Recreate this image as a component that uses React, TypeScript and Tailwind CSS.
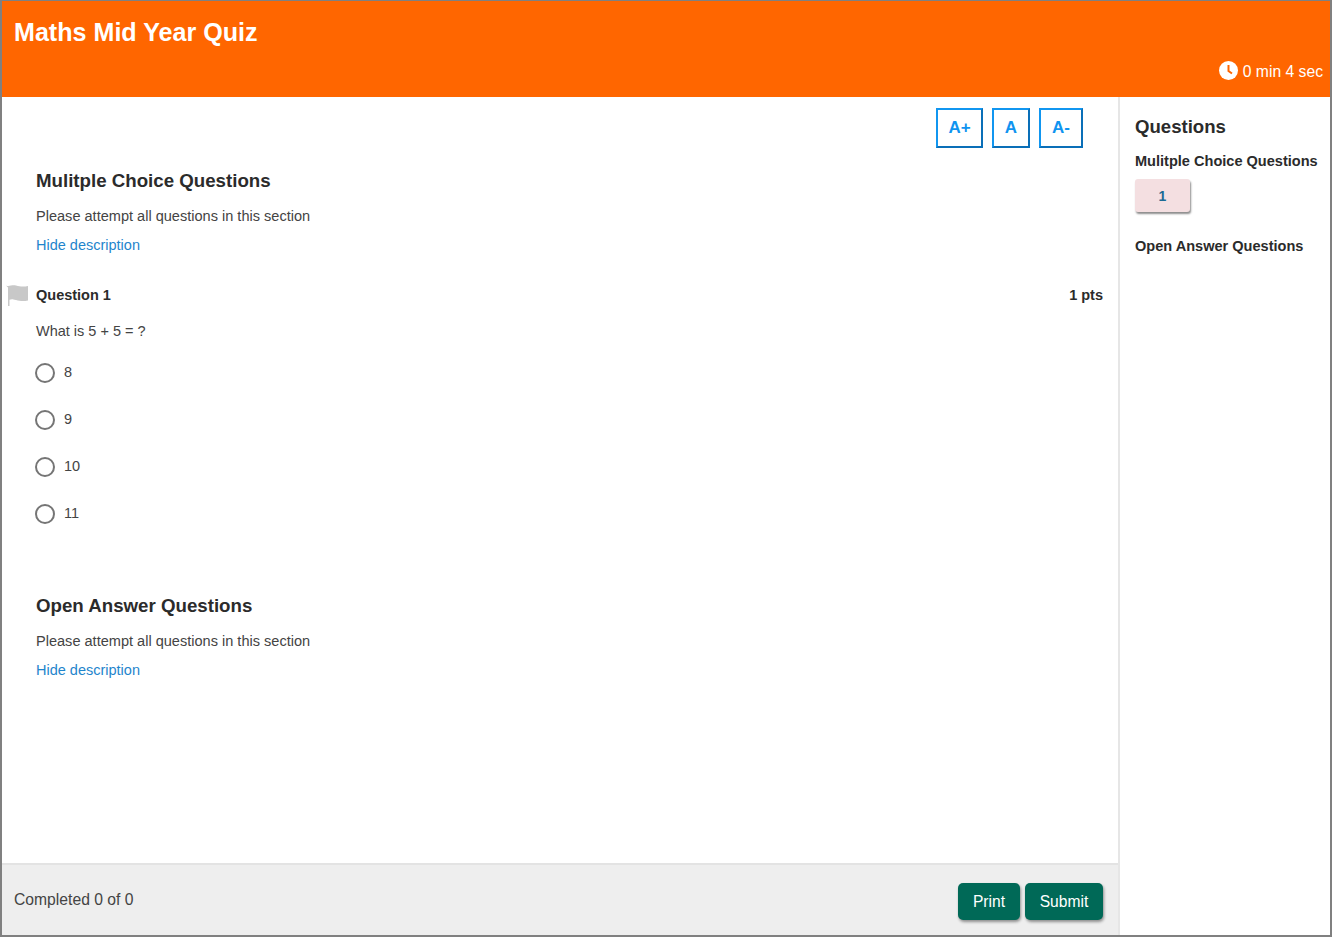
const options = ['8', '9', '10', '11'];

function SectionIntro({ title }: { title: string }) {
    return (
        <div>
            <h2 className="text-[18.7px] leading-[24px] font-bold text-[#2b2b2b]">{title}</h2>
            <p className="mt-[13px] text-[14.55px] leading-[20px] text-[#444]">Please attempt all questions in this section</p>
            <a className="block mt-[9px] text-[14.5px] leading-[20px] text-[#1f85cc]">Hide description</a>
        </div>
    );
}

function FontButton({ label, width }: { label: string; width: string }) {
    return (
        <button className={`${width} h-[40px] border-2 border-t-[#1196f0] border-l-[#1196f0] border-r-[#0a6fb8] border-b-[#0a6fb8] bg-white text-[17px] font-bold text-[#0f94f0]`}>
            {label}
        </button>
    );
}

export default function App() {
    return (
        <div className="w-[1332px] h-[937px] flex flex-col bg-white border-2 border-t border-[#808080] overflow-hidden font-['Liberation_Sans',Arial,sans-serif]">
            <header className="h-[96px] shrink-0 bg-[#ff6600] text-white flex flex-col pl-[12px] pr-[7px]">
                <h1 className="mt-[16px] text-[25.1px] leading-[30px] font-bold">Maths Mid Year Quiz</h1>
                <div className="mt-[15px] flex items-center justify-end gap-[5px] text-[15.7px] leading-[20px]">
                    <svg width="19" height="19" viewBox="0 0 19 19" className="mt-[-3px]">
                        <circle cx="9.500" cy="9.500" r="9.500" fill="#ffffff" />
                        <path d="M9.500 4v6l3.500 2.500" fill="none" stroke="#ff6600" strokeWidth="2" />
                    </svg>
                    0 min 4 sec
                </div>
            </header>

            <div className="flex-1 flex min-h-0">
                <main className="w-[1118px] flex flex-col border-r-2 border-[#e6e6e6]">
                    <div className="flex-1">
                        <div className="flex justify-end gap-[9px] pt-[11px] pr-[35px]">
                            <FontButton label="A+" width="w-[47px]" />
                            <FontButton label="A" width="w-[38px]" />
                            <FontButton label="A-" width="w-[44px]" />
                        </div>

                        <div className="pl-[34px] pr-[15px] mt-[21px]">
                            <SectionIntro title="Mulitple Choice Questions" />

                            <div className="relative mt-[30px] flex justify-between text-[14.5px] leading-[20px] font-bold text-[#2b2b2b]">
                                <svg className="absolute left-[-31px] top-[-1px]" width="24" height="23" viewBox="0 0 24 23">
                                    <path d="M1 1.500C4 3 7 .5 11 1.500s7 1.500 12 .5v14.500c-5 1-8 .5-12-.5s-4-1-6.500-.3V22H3V3.500L1 1.500z" fill="#c8c8c8" />
                                </svg>
                                <span>Question 1</span>
                                <span>1 pts</span>
                            </div>

                            <p className="mt-[16px] text-[14.5px] leading-[20px] text-[#444]">What is 5 + 5 = ?</p>

                            <div className="mt-[8px]">
                                {options.map((option) => (
                                    <label key={option} className="h-[47px] flex items-center gap-[9px] text-[14.5px] text-[#444]">
                                        <span className="ml-[-1px] w-[20px] h-[20px] rounded-full border-2 border-[#757575] bg-white" />
                                        <span className="mt-[1px]">{option}</span>
                                    </label>
                                ))}
                            </div>

                            <div className="mt-[57px]">
                                <SectionIntro title="Open Answer Questions" />
                            </div>
                        </div>
                    </div>

                    <footer className="h-[72px] shrink-0 bg-[#eeeeee] border-t-2 border-[#e3e3e3] flex items-center justify-between pl-[12px] pr-[15px]">
                        <span className="text-[15.7px] text-[#444]">Completed 0 of 0</span>
                        <div className="flex gap-[5px] mt-[3px]">
                            <button className="h-[37px] w-[62px] rounded-[5px] bg-[#006957] text-[15.6px] text-white shadow-[1px_2px_3px_rgba(0,0,0,0.4)]">Print</button>
                            <button className="h-[37px] w-[78px] rounded-[5px] bg-[#006957] text-[15.6px] text-white shadow-[1px_2px_3px_rgba(0,0,0,0.4)]">Submit</button>
                        </div>
                    </footer>
                </main>

                <aside className="flex-1 pl-[15px] pt-[18px]">
                    <h3 className="text-[18.6px] leading-[24px] font-bold text-[#2b2b2b]">Questions</h3>
                    <h4 className="mt-[12px] text-[14.55px] leading-[20px] font-bold text-[#2b2b2b]">Mulitple Choice Questions</h4>
                    <button className="block mt-[8px] w-[55px] h-[33px] rounded-[3px] bg-[#f4dfe1] text-sm font-bold text-[#1b6a94] shadow-[1px_2px_2px_rgba(0,0,0,0.45)]">1</button>
                    <h4 className="mt-[24px] text-[14.55px] leading-[20px] font-bold text-[#2b2b2b]">Open Answer Questions</h4>
                </aside>
            </div>
        </div>
    );
}
